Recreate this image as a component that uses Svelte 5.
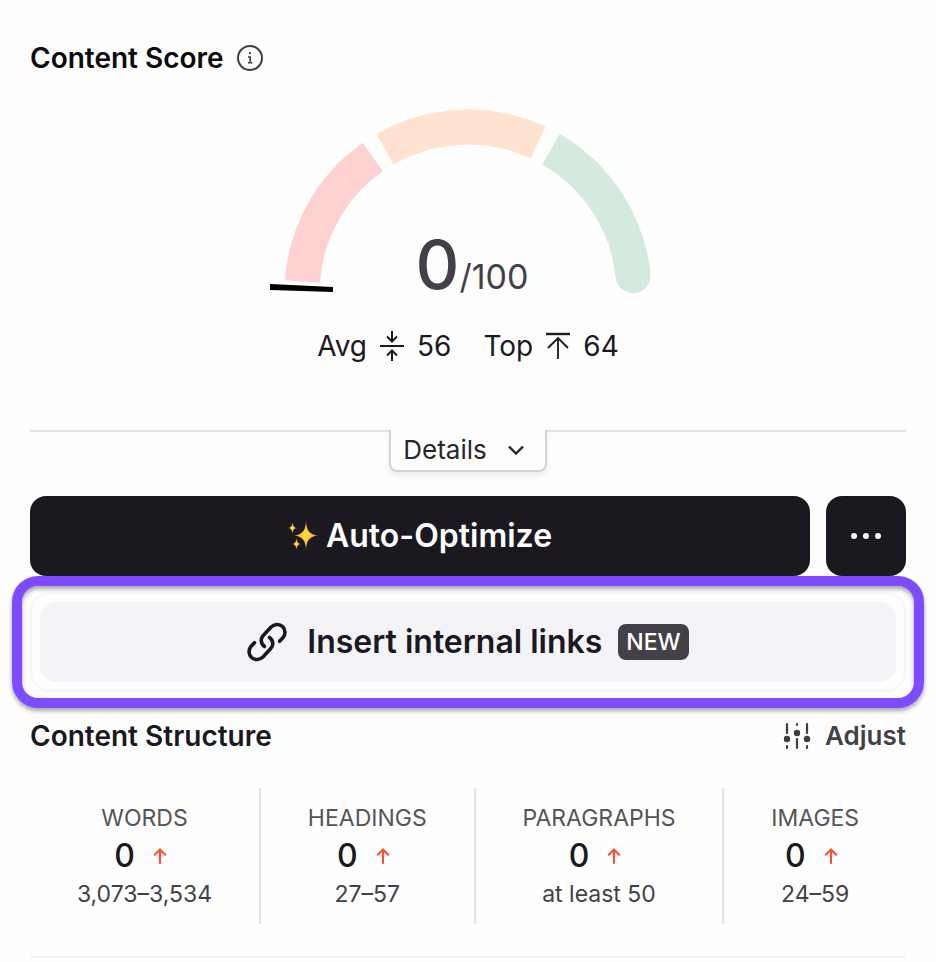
<script lang="ts">
  let score = $state(0);
  let showDetails = $state(false);

  const stats = [
    { label: "WORDS", value: 0, range: "3,073–3,534" },
    { label: "HEADINGS", value: 0, range: "27–57" },
    { label: "PARAGRAPHS", value: 0, range: "at least 50" },
    { label: "IMAGES", value: 0, range: "24–59" },
  ];

  // gauge geometry, angles go clockwise from the left end
  const cx = 198;
  const cy = 185;
  const radius = 166;
  const segments = [
    { from: 4, to: 55, color: "#ffd2d1" },
    { from: 60, to: 115, color: "#ffe2d0" },
    { from: 120, to: 174, color: "#d5eadf" },
  ];

  function point(deg: number, r = radius) {
    const a = (deg * Math.PI) / 180;
    return { x: cx - r * Math.cos(a), y: cy - r * Math.sin(a) };
  }
  function arc(from: number, to: number) {
    const a = point(from);
    const b = point(to);
    return `M${a.x} ${a.y}A${radius} ${radius} 0 0 1 ${b.x} ${b.y}`;
  }
  const cap = point(174);
</script>

<main class="panel">
  <header class="title-row">
    <h2>Content Score</h2>
    <button class="plain" aria-label="About content score">
      <svg width="28" height="28" viewBox="0 0 28 28" fill="none" stroke="#3f3d44" stroke-width="2">
        <circle cx="14" cy="14" r="12" />
        <path d="M12 13h2.2v5.6M12 18.8h4.4" stroke-width="1.6" />
        <circle cx="14" cy="9.2" r="1.1" fill="#3f3d44" stroke="none" />
      </svg>
    </button>
  </header>

  <div class="gauge">
    <svg width="396" height="188" viewBox="0 0 396 188" fill="none">
      {#each segments as s}
        <path d={arc(s.from, s.to)} stroke={s.color} stroke-width="35" />
      {/each}
      <circle cx={cap.x} cy={cap.y} r="17.5" fill="#d5eadf" />
      <g transform="rotate({score * 1.8} {cx} {cy})">
        <path d="M0 176l63 3v5l-63-2z" fill="#000" />
      </g>
    </svg>
    <p class="score"><span class="value">{score}</span><span class="max">/100</span></p>
  </div>

  <div class="compare">
    <span class="metric">
      Avg
      <svg width="26" height="32" viewBox="0 0 26 32" fill="none" stroke="#1b191f" stroke-width="2">
        <path d="M1 16h24M13 1v10M8 6.500l5 5 5-5M13 31V21M8 25.500l5-5 5 5" />
      </svg>
      56
    </span>
    <span class="metric">
      Top
      <svg width="26" height="32" viewBox="0 0 26 32" fill="none" stroke="#1b191f" stroke-width="2">
        <path d="M1 4h24" stroke-width="2.400" />
        <path d="M13 29V8M3 18L13 8l10 10" stroke-width="1.800" />
      </svg>
      64
    </span>
  </div>

  <div class="divider">
    <button class="details" aria-expanded={showDetails} onclick={() => (showDetails = !showDetails)}>
      Details
      <svg width="18" height="12" viewBox="0 0 18 12" fill="none" stroke="#28262c" stroke-width="2.400">
        <path d="M2 2.500l7 7 7-7" />
      </svg>
    </button>
  </div>

  <div class="actions">
    <button class="dark optimize">
      <svg width="30" height="32" viewBox="0 0 30 32">
        <defs>
          <radialGradient id="spark">
            <stop offset="0" stop-color="#ffe04a" />
            <stop offset="0.500" stop-color="#fdc52f" />
            <stop offset="1" stop-color="#d9801c" />
          </radialGradient>
        </defs>
        <g fill="url(#spark)">
          <path d="M18 1c.8 9.500 2.500 13.200 12 14.500-9.500 1.300-11.200 5-12 14.500-.8-9.500-2.500-13.200-12-14.500 9.500-1.300 11.200-5 12-14.500z" />
          <path d="M4.500 2c.4 4 1.200 5.500 4.500 6-3.300.5-4.100 2-4.500 6-.4-4-1.200-5.500-4.500-6 3.300-.5 4.100-2 4.500-6z" />
          <path d="M8.500 18c.4 4 1.200 5.500 4.500 6-3.300.5-4.100 2-4.500 6-.4-4-1.200-5.500-4.500-6 3.300-.5 4.100-2 4.500-6z" />
        </g>
      </svg>
      Auto-Optimize
    </button>
    <button class="dark more" aria-label="More options">
      <svg width="30" height="8" viewBox="0 0 30 8" fill="#fff">
        <circle cx="3" cy="4" r="3" />
        <circle cx="15" cy="4" r="3" />
        <circle cx="27" cy="4" r="3" />
      </svg>
    </button>
  </div>

  <div class="highlight">
    <div class="outline">
      <button class="links">
        <svg width="40" height="40" viewBox="0 0 40 40" fill="none" stroke="#1b191f" stroke-width="3.600" stroke-linecap="round">
          <path d="M17.500 24.500c-4-3-4.200-8-1.200-11l7.500-8.200c3.500-3.500 8.500-3.800 11.700-.8 3.200 3.200 3.300 8.200.2 11.500l-3.200 3.300" />
          <path d="M22.500 15.500c4 3 4.200 8 1.200 11l-7.500 8.200c-3.500 3.500-8.500 3.800-11.700.8-3.200-3.200-3.300-8.200-.2-11.500l3.200-3.300" />
        </svg>
        Insert internal links
        <span class="badge">NEW</span>
      </button>
    </div>
  </div>

  <header class="title-row structure">
    <h2>Content Structure</h2>
    <button class="plain adjust">
      <svg width="28" height="28" viewBox="0 0 28 28" fill="#3f3d44" stroke="#3f3d44" stroke-width="2.200" stroke-linecap="round">
        <path d="M4 2v9M4 24v2M14 2v1M14 17v9M24 2v9M24 24v2" />
        <g stroke="none">
          <circle cx="4" cy="17" r="3.200" />
          <circle cx="14" cy="11" r="3.200" />
          <circle cx="24" cy="17" r="3.200" />
        </g>
      </svg>
      Adjust
    </button>
  </header>

  <dl class="stats">
    {#each stats as stat}
      <div class="stat">
        <dt>{stat.label}</dt>
        <dd class="count">
          {stat.value}
          <svg width="14" height="18" viewBox="0 0 14 18" fill="none" stroke="#fb5038" stroke-width="2.200" stroke-linecap="round">
            <path d="M7 16V2.500M1.800 7.700L7 2.500l5.200 5.200" />
          </svg>
        </dd>
        <dd class="range">{stat.range}</dd>
      </div>
    {/each}
  </dl>
</main>

<style>
  :global(body) {
    background: #fefefe;
  }
  .panel {
    padding: 40px 30px 0;
    font-family: Inter, "Liberation Sans", sans-serif;
    font-size: 28px;
    line-height: 36px;
    color: #1b191f;
  }
  h2,
  p,
  dl,
  dd {
    margin: 0;
  }
  h2 {
    font-size: 28px;
    font-weight: 600;
    color: #0c0b0e;
  }
  button {
    font: inherit;
    color: inherit;
    border: none;
    cursor: pointer;
    display: flex;
    align-items: center;
    justify-content: center;
  }
  svg {
    display: block;
    flex: none;
  }
  .title-row {
    display: flex;
    align-items: center;
    gap: 12px;
  }
  .plain {
    padding: 0;
    background: none;
  }
  .gauge {
    display: grid;
    justify-items: center;
    margin-top: 32px;
  }
  .gauge > * {
    grid-area: 1 / 1;
  }
  .score {
    display: flex;
    align-items: baseline;
    align-self: end;
    padding-left: 8px;
    color: #434147;
  }
  .value {
    font-size: 68px;
    line-height: 64px;
    font-weight: 500;
  }
  .max {
    font-size: 34px;
  }
  .compare {
    display: flex;
    justify-content: center;
    gap: 32px;
    margin-top: 32px;
  }
  .metric {
    display: flex;
    align-items: center;
    gap: 12px;
  }
  .divider {
    display: flex;
    justify-content: center;
    margin-top: 66px;
    background: linear-gradient(#e2e1e4 2px, transparent 2px);
  }
  .details {
    gap: 20px;
    height: 42px;
    padding: 0 20px 0 12px;
    background: #fefefe;
    border: solid #d2d1d5;
    border-width: 0 2px 2px;
    border-radius: 0 0 8px 8px;
    box-shadow: 0 4px 6px rgba(40, 20, 60, 0.08);
    font-size: 26px;
    color: #28262c;
  }
  .actions {
    display: flex;
    gap: 16px;
    margin-top: 24px;
  }
  .dark {
    height: 80px;
    background: #1b191f;
    color: #fff;
    border-radius: 16px;
  }
  .optimize {
    flex: 1;
    gap: 8px;
    font-size: 32px;
    font-weight: 600;
  }
  .more {
    width: 80px;
  }
  .highlight {
    margin: 0 -18px;
    padding: 6px 8px;
    border: 10px solid #7c4dff;
    border-radius: 26px;
    box-shadow:
      0 3px 4px rgba(0, 0, 0, 0.35),
      inset 0 3px 4px rgba(0, 0, 0, 0.35);
  }
  .outline {
    padding: 8px;
    border: 2px solid #f6f5f8;
    border-radius: 20px;
  }
  .links {
    width: 100%;
    height: 80px;
    gap: 20px;
    background: #f4f3f7;
    border-radius: 16px;
    font-size: 32px;
    font-weight: 600;
  }
  .badge {
    margin-left: -4px;
    padding: 0 8px;
    border-radius: 8px;
    background: #434047;
    color: #fff;
    font-size: 23px;
    font-weight: 500;
  }
  .structure {
    justify-content: space-between;
    margin-top: 10px;
  }
  .structure h2 {
    color: #1b191f;
  }
  .adjust {
    gap: 14px;
    font-size: 26px;
    font-weight: 600;
    color: #434147;
  }
  .stats {
    display: flex;
    margin-top: 34px;
    padding-bottom: 32px;
    border-bottom: 2px solid #f3f3f4;
  }
  .stat {
    flex: 1 1 auto;
    padding: 12px 0;
    text-align: center;
  }
  .stat + .stat {
    border-left: 2px solid #e2e1e4;
  }
  dt,
  .range {
    font-size: 23px;
    color: #56545a;
  }
  .range {
    color: #434147;
  }
  .count {
    display: flex;
    align-items: center;
    justify-content: center;
    gap: 18px;
    height: 40px;
    padding-right: 8px;
    font-size: 32px;
    font-weight: 500;
  }
</style>
